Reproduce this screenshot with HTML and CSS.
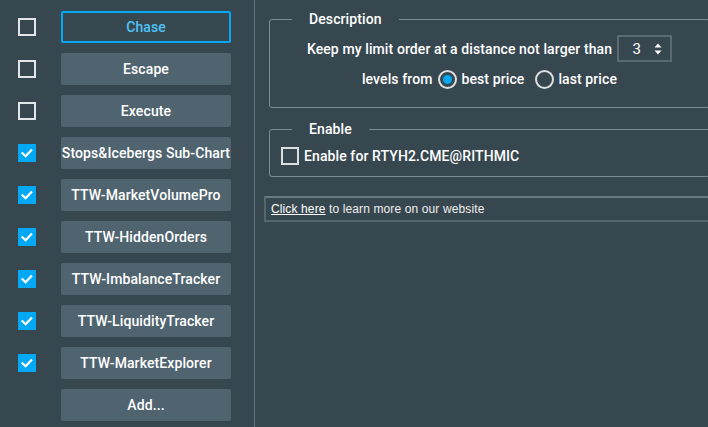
FILE: index.html
```html
<!DOCTYPE html>
<html>
<head>
<meta charset="utf-8">
<link rel="stylesheet" href="styles.css">
</head>
<body>
<div class="app">
  <div class="sidebar">
    <div class="row"><span class="cb"></span><button class="btn active">Chase</button></div>
    <div class="row"><span class="cb"></span><button class="btn">Escape</button></div>
    <div class="row"><span class="cb"></span><button class="btn">Execute</button></div>
    <div class="row"><span class="cb checked"><svg viewBox="0 0 18 18"><path d="M4.5 9.2 L7.6 12.2 L13.2 6.4"/></svg></span><button class="btn">Stops&amp;Icebergs Sub-Chart</button></div>
    <div class="row"><span class="cb checked"><svg viewBox="0 0 18 18"><path d="M4.5 9.2 L7.6 12.2 L13.2 6.4"/></svg></span><button class="btn">TTW-MarketVolumePro</button></div>
    <div class="row"><span class="cb checked"><svg viewBox="0 0 18 18"><path d="M4.5 9.2 L7.6 12.2 L13.2 6.4"/></svg></span><button class="btn">TTW-HiddenOrders</button></div>
    <div class="row"><span class="cb checked"><svg viewBox="0 0 18 18"><path d="M4.5 9.2 L7.6 12.2 L13.2 6.4"/></svg></span><button class="btn">TTW-ImbalanceTracker</button></div>
    <div class="row"><span class="cb checked"><svg viewBox="0 0 18 18"><path d="M4.5 9.2 L7.6 12.2 L13.2 6.4"/></svg></span><button class="btn">TTW-LiquidityTracker</button></div>
    <div class="row"><span class="cb checked"><svg viewBox="0 0 18 18"><path d="M4.5 9.2 L7.6 12.2 L13.2 6.4"/></svg></span><button class="btn">TTW-MarketExplorer</button></div>
    <div class="row"><span class="cb-space"></span><button class="btn">Add...</button></div>
  </div>
  <div class="main">
    <fieldset class="group desc">
      <legend>Description</legend>
      <div class="line1">
        <span>Keep my limit order at a distance not larger than</span>
        <span class="spin"><span class="spin-val">3</span><svg class="spin-arrows" viewBox="0 0 8 12"><path d="M4 0.5 L7.5 4.5 L0.5 4.5 Z"/><path d="M4 11.5 L7.5 7.5 L0.5 7.5 Z"/></svg></span>
      </div>
      <div class="line2">
        <span>levels from</span>
        <span class="radio on"></span><span class="rlabel">best price</span>
        <span class="radio second"></span><span class="rlabel">last price</span>
      </div>
    </fieldset>
    <fieldset class="group enable">
      <legend>Enable</legend>
      <div class="enable-row"><span class="cb small"></span><span>Enable for RTYH2.CME@RITHMIC</span></div>
    </fieldset>
    <div class="linkbar"><a class="link">Click here</a> to learn more on our website</div>
  </div>
</div>
</body>
</html>
```
FILE: styles.css
```css
* { box-sizing: border-box; }
html, body { margin: 0; padding: 0; }
body {
  background: #37474f;
  color: #ffffff;
  font-family: Roboto, "Noto Sans", sans-serif;
  width: 708px;
  height: 427px;
  overflow: hidden;
}
.app { display: flex; height: 427px; }
.sidebar {
  width: 255px;
  flex: none;
  border-right: 1px solid #5d7684;
  padding-top: 11px;
  display: flex;
  flex-direction: column;
  gap: 10px;
}
.row { display: flex; align-items: center; height: 32px; }
.cb {
  width: 18px; height: 18px;
  margin-left: 18px;
  border: 2px solid #e3e6e8;
  flex: none;
  display: inline-block;
}
.cb.checked { background: #03a9f4; border-color: #03a9f4; }
.cb.checked svg { display: block; width: 18px; height: 18px; margin: -2px; }
.cb.checked path { fill: none; stroke: #ffffff; stroke-width: 2.2; stroke-linecap: square; }
.cb-space { width: 36px; flex: none; }
.btn {
  margin-left: 25px;
  width: 170px;
  height: 32px;
  border: none;
  border-radius: 2px;
  background: #50646f;
  color: #ffffff;
  font-family: Roboto, sans-serif;
  font-weight: 500;
  font-size: 14px;
  letter-spacing: 0.1px;
  padding: 0;
  white-space: nowrap;
}
.btn.active {
  background: #37474f;
  border: 2px solid #03a9f4;
  color: #4fc3f7;
}
.main {
  flex: 1;
  padding-top: 11px;
  font-size: 14px;
  font-weight: 500;
  letter-spacing: 0.1px;
}
.group {
  border: 1px solid #7d8c94;
  border-radius: 3px;
  margin: 0 -2px 0 14px;
  padding: 0;
  min-width: 0;
  text-align: left;
}
.group legend {
  margin-left: 22px;
  padding: 0 17px;
  line-height: 16px;
  font-size: 14px;
  font-weight: 500;
  text-align: left;
}
.desc { padding: 8px 0 18px; }
.line1 { display: flex; align-items: center; justify-content: center; height: 27px; }
.spin {
  margin-left: 5px;
  width: 55px; height: 27px;
  border: 2px solid #5b6a72;
  display: flex; align-items: center; justify-content: flex-end;
  padding-right: 8px;
}
.spin-val { font-size: 15px; font-weight: 400; margin-right: 13px; }
.spin-arrows { width: 8px; height: 12px; }
.spin-arrows path { fill: #ffffff; }
.line2 { display: flex; align-items: center; justify-content: center; height: 20px; margin-top: 7px; }
.radio {
  width: 19px; height: 19px;
  border: 2px solid #dcdfe1;
  border-radius: 50%;
  margin-left: 6px;
  margin-right: 4px;
  display: flex; align-items: center; justify-content: center;
}
.radio.second { margin-left: 11px; }
.radio.on::after {
  content: "";
  width: 9px; height: 9px;
  border-radius: 50%;
  background: #03a9f4;
}
.enable { margin-top: 13px; padding: 10px 0 11px 11px; }
.enable legend { margin-left: 11px; }
.enable-row { display: flex; align-items: center; height: 18px; font-size: 14px; }
.cb.small { margin-left: 0; margin-right: 5px; border-color: #dcdfe1; }
.linkbar {
  margin-top: 19px;
  margin-left: 9px;
  margin-right: -4px;
  height: 26px;
  border: 2px solid #56666e;
  border-top-color: #6b7a82;
  font-family: "Liberation Sans", Arial, sans-serif;
  font-weight: 400;
  font-size: 12px;
  letter-spacing: 0.12px;
  color: #eeeeee;
  display: flex; align-items: center;
  padding-left: 5px;
  white-space: pre;
}
.link { text-decoration: underline; color: #ffffff; }
```
